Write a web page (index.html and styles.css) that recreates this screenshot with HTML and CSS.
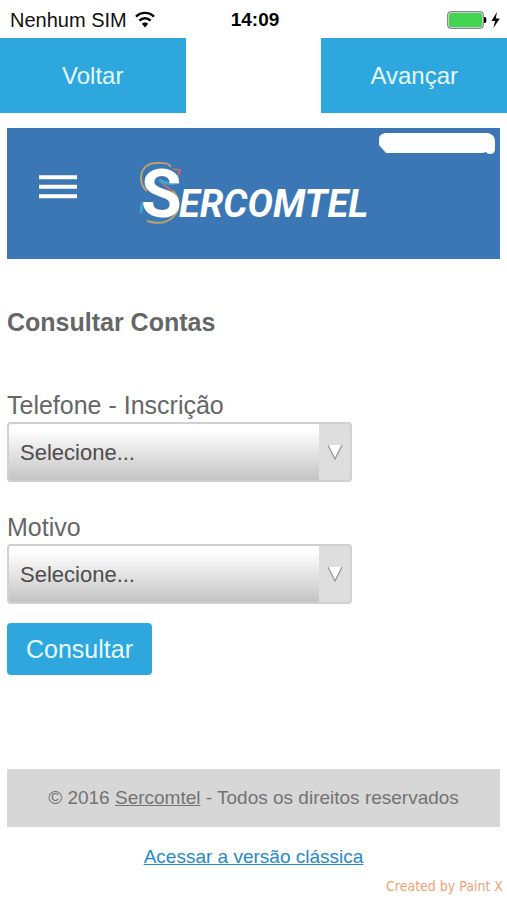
FILE: index.html
```html
<!DOCTYPE html>
<html lang="pt-BR">
<head>
<meta charset="utf-8">
<meta name="viewport" content="width=device-width, initial-scale=1">
<title>Consultar Contas</title>
<link rel="stylesheet" href="styles.css">
</head>
<body>
<div class="status">
  <div class="carrier">
    <span>Nenhum SIM</span>
    <svg class="wifi" width="20" height="18" viewBox="0 0 20 18" aria-hidden="true">
      <g fill="none" stroke="#000" stroke-width="2.4">
        <path d="M1 5.6C6 .6 14 .6 19 5.6"/>
        <path d="M4.4 9.6c3.2-3.2 8-3.2 11.2 0"/>
      </g>
      <path d="M6.8 12.8c1.8-1.8 4.6-1.8 6.4 0L10 16.6z"/>
    </svg>
  </div>
  <strong class="clock">14:09</strong>
  <svg class="battery" width="53" height="20" viewBox="0 0 53 20" aria-hidden="true">
    <rect x=".8" y="1.8" width="35.4" height="16.4" rx="2.5" fill="#fff" stroke="#555"/>
    <rect x="2" y="3" width="33" height="14" rx="1.5" fill="#43d551"/>
    <path d="M37 7h1.2q1.2 0 1.2 3t-1.2 3H37z"/>
    <path d="M50 2l-5.600 9h3.700l-1.700 7 6.400-9.500h-4z"/>
  </svg>
</div>
<nav class="steps">
  <button type="button" class="step">Voltar</button>
  <button type="button" class="step">Avançar</button>
</nav>
<div class="page">
  <header class="banner">
    <button type="button" class="menu" aria-label="Menu">
      <svg width="38" height="24" viewBox="0 0 38 24" aria-hidden="true">
        <path d="M0 2.200h38M0 11.700h38M0 21.200h38" stroke="#fff" stroke-width="4"/>
      </svg>
    </button>
    <svg class="logo" width="232" height="86" viewBox="0 -10 232 86">
      <g fill="none" stroke-width="2">
        <path d="M32 6C29 1 25 2 18 2 8 2 2 8 2 17c0 6 2 10 6 13" stroke="#b9a36c"/>
        <path d="M34 8l7 1-3 9" stroke="#b86e78"/>
        <path d="M21 20l13 11c6 6 7 15 3 22" stroke="#b86e78"/>
        <path d="M20 19c5 3 11 4 17 3l2-7M15 43H3l-1 9" stroke="#3ea5c9" stroke-width="3"/>
        <path d="M34 30c8 8 7 19 0 26-6 6-16 7-26 4" stroke="#b9a36c"/>
      </g>
      <text class="logo-text" y="56"><tspan class="logo-initial" x="2">S</tspan><tspan x="40">ERCOMTEL</tspan></text>
    </svg>
    <svg class="mask" width="118" height="22" viewBox="0 0 118 22" aria-hidden="true">
      <path d="M7 1h103q7 2 7 8v8q0 5-5 5-3 0-4-2-2 1-5 1H8L1 13V6q1-4 6-5z" fill="#fff"/>
    </svg>
  </header>
  <main>
    <h1>Consultar Contas</h1>
    <form>
      <label for="phone">Telefone - Inscrição</label>
      <div class="field">
        <select id="phone"><option>Selecione...</option></select>
        <svg class="arrow" width="16" height="16" viewBox="0 0 16 16" aria-hidden="true"><path d="M1 1h14L8 15z" fill="#fff"/><path d="M1 1l7 14 7-14" fill="none" stroke="#999" stroke-width="1.300"/></svg>
      </div>
      <label for="reason">Motivo</label>
      <div class="field">
        <select id="reason"><option>Selecione...</option></select>
        <svg class="arrow" width="16" height="16" viewBox="0 0 16 16" aria-hidden="true"><path d="M1 1h14L8 15z" fill="#fff"/><path d="M1 1l7 14 7-14" fill="none" stroke="#999" stroke-width="1.300"/></svg>
      </div>
      <button type="button" class="submit">Consultar</button>
    </form>
  </main>
  <footer>
    <p class="copyright">© 2016 <a href="#">Sercomtel</a> - Todos os direitos reservados</p>
    <a class="classic" href="#">Acessar a versão clássica</a>
  </footer>
</div>
<p class="credit">Created by Paint X</p>
</body>
</html>
```

FILE: styles.css
```css
* { box-sizing: border-box; }

body {
  margin: 0;
  background: #fff;
  color: #666;
  font-family: "Liberation Sans", Arial, sans-serif;
}

button, select { font-family: inherit; }

.status {
  display: grid;
  grid-template-columns: 1fr auto 1fr;
  align-items: center;
  height: 38px;
  padding: 2px 7px 0 10px;
  color: #111;
  font-size: 20px;
}

.carrier {
  display: flex;
  align-items: center;
  gap: 8px;
}

.clock {
  color: #000;
  font-size: 19px;
}

.battery { justify-self: end; }

.steps {
  display: flex;
  justify-content: space-between;
}

.step {
  width: 36.6%;
  height: 75px;
  border: 0;
  background: #2ea6de;
  color: #e6faff;
  font-size: 24px;
}

.page { padding: 15px 7px 0; }

.banner {
  position: relative;
  display: flex;
  align-items: center;
  height: 131px;
  padding-left: 32px;
  background: #3c77b5;
}

.menu {
  display: flex;
  margin-bottom: 14px;
  padding: 0;
  border: 0;
  background: none;
}

.logo { margin-left: 62px; }

.logo-text {
  fill: #fff;
  font: italic bold 38px Roboto, sans-serif;
}

.logo-initial {
  font-size: 66px;
  font-style: normal;
}

.mask {
  position: absolute;
  top: 4px;
  right: 4px;
}

h1 {
  margin: 46px 0 50px;
  font-size: 25px;
  line-height: 34px;
}

label {
  display: block;
  font-size: 25px;
  line-height: 33px;
}

.field {
  position: relative;
  width: 70%;
  margin-bottom: 29px;
}

select {
  display: block;
  width: 100%;
  height: 60px;
  padding: 0 40px 0 11px;
  appearance: none;
  border: 2px solid #d0d0d0;
  border-radius: 4px;
  background:
    linear-gradient(#dedede, #dedede) right / 31px 100% no-repeat,
    linear-gradient(#fff 10%, #c4c4c4);
  color: #4d4d4d;
  font-size: 22px;
}

.arrow {
  position: absolute;
  top: 22px;
  right: 9px;
  pointer-events: none;
}

.submit {
  display: block;
  height: 52px;
  margin-top: -10px;
  padding: 0 19px;
  border: 0;
  border-radius: 4px;
  background: #2ea6de;
  color: #e6faff;
  font-size: 25px;
}

footer {
  margin-top: 94px;
  text-align: center;
}

.copyright {
  margin: 0 0 16px;
  background: #d7d7d7;
  color: #737373;
  font-size: 19px;
  line-height: 58px;
}

.copyright a { color: inherit; }

.classic {
  display: block;
  color: #2688c9;
  font-size: 19px;
  line-height: 28px;
}

.credit {
  margin: 4px 4px 0;
  color: #f2a173;
  font-family: "DejaVu Sans Condensed", "DejaVu Sans", sans-serif;
  font-size: 14px;
  line-height: 22px;
  text-align: right;
}
```
